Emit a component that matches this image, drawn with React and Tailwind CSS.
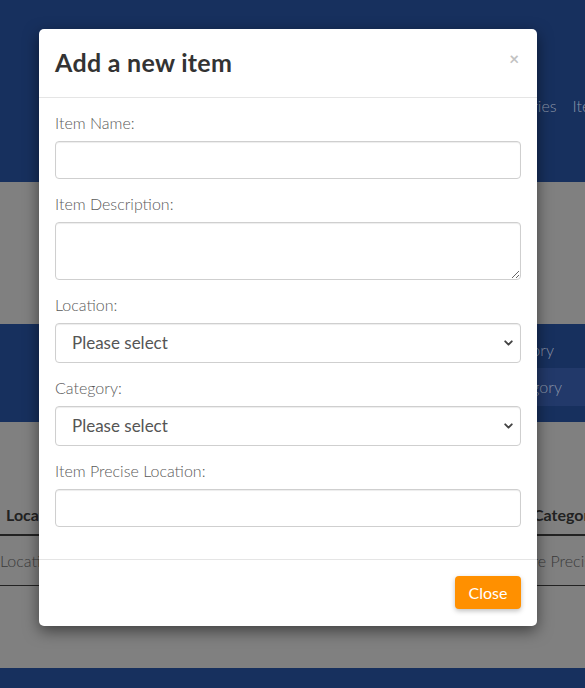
import { ChevronDown } from 'lucide-react'

function Field({ label, children }) {
    return (
        <div className="mt-[14px] first:mt-0">
            <label className="block text-[16px] leading-[22px] font-light text-[#5a5a5a] mb-[7px]">{label}</label>
            {children}
        </div>
    )
}

function SelectBox() {
    return (
        <div className="relative">
            <select className="w-full h-[40px] appearance-none rounded-[4px] border border-[#cfcfcf] bg-white pl-4 pr-8 text-[17px] text-[#555] shadow-[inset_0_1px_1px_rgba(0,0,0,0.075)] outline-none">
                <option>Please select</option>
            </select>
            {/* native-looking chevron */}
            <ChevronDown size={13} strokeWidth={3.5} className="pointer-events-none absolute right-[6px] top-1/2 -translate-y-1/2 text-[#444]" />
        </div>
    )
}

export default function App() {
    return (
        <div className="relative h-[688px] w-full overflow-hidden bg-[#808080]" style={{ fontFamily: 'Lato, "Open Sans", sans-serif' }}>
            {/* Page behind the backdrop (already dimmed) */}
            <div className="flex flex-col">
                <header className="h-[182px] bg-[#17305e] flex justify-end pt-[94px] overflow-hidden">
                    <nav className="flex gap-4 text-[16px] font-light text-[#8b95a8] -mr-[25px]">
                        <span>Categories</span>
                        <span>Items</span>
                    </nav>
                </header>
                <section className="h-[142px] bg-[#808080]" />
                <section className="h-[98px] bg-[#17305e] flex flex-col items-end pt-[8px]">
                    <div className="h-[36px] w-[48px] flex items-center text-[16px] font-light text-[#8b95a8] overflow-hidden whitespace-nowrap">
                        <span className="-ml-[46px]">Category</span>
                    </div>
                    <div className="h-[38px] w-[48px] bg-[#22396a] flex items-center text-[16px] font-light text-[#8b95a8] overflow-hidden whitespace-nowrap">
                        <span className="-ml-[38px]">Category</span>
                    </div>
                </section>
                <section className="h-[246px] bg-[#808080] pt-[73px]">
                    <div className="flex justify-between">
                        <div className="w-[60px]">
                            <div className="h-[41px] flex items-center pl-[6px] border-b-2 border-[#222] font-bold text-[16px] text-[#222]">Location</div>
                        </div>
                        <div className="flex-1" />
                        <div className="w-[75px] overflow-hidden">
                            <div className="h-[41px] flex items-center pl-[23px] border-b-2 border-[#222] font-bold text-[16px] text-[#222] whitespace-nowrap">Category</div>
                        </div>
                    </div>
                    <div className="h-[50px] flex items-center border-b border-[#222] text-[16px] font-light text-[#3a3a3a] whitespace-nowrap overflow-hidden">
                        <span>Location 1</span>
                        <span className="ml-auto w-[75px] overflow-hidden">Store Precise Location</span>
                    </div>
                </section>
                <footer className="h-[20px] bg-[#17305e]" />
            </div>

            {/* Modal */}
            <div className="absolute left-[39px] top-[29px] w-[498px] rounded-[5px] bg-white shadow-[0_5px_15px_rgba(0,0,0,0.5)]">
                <div className="h-[69px] flex items-center justify-between pl-4 pr-[18px] border-b border-[#e5e5e5]">
                    <h4 className="text-[25px] font-bold text-[#333] tracking-[0.3px]">Add a new item</h4>
                    <button className="-mt-[10px] text-[17px] font-bold leading-none text-[#c2c2c2]">×</button>
                </div>

                <div className="px-4 pt-[14px] pb-[32px]">
                    <Field label="Item Name:">
                        <input className="block w-full h-[38px] rounded-[4px] border border-[#cfcfcf] px-3 shadow-[inset_0_1px_1px_rgba(0,0,0,0.075)] outline-none" />
                    </Field>
                    <Field label="Item Description:">
                        <textarea className="block w-full h-[58px] rounded-[4px] border border-[#cfcfcf] px-3 shadow-[inset_0_1px_1px_rgba(0,0,0,0.075)] outline-none" />
                    </Field>
                    <Field label="Location:">
                        <SelectBox />
                    </Field>
                    <Field label="Category:">
                        <SelectBox />
                    </Field>
                    <Field label="Item Precise Location:">
                        <input className="block w-full h-[38px] rounded-[4px] border border-[#cfcfcf] px-3 shadow-[inset_0_1px_1px_rgba(0,0,0,0.075)] outline-none" />
                    </Field>
                </div>

                <div className="flex justify-end border-t border-[#e5e5e5] px-4 pt-4 pb-[17px]">
                    <button className="h-[33px] w-[66px] rounded-[4px] bg-[#ff9000] text-[16px] text-white shadow-[0_2px_5px_rgba(0,0,0,0.25)]">
                        Close
                    </button>
                </div>
            </div>
        </div>
    )
}
